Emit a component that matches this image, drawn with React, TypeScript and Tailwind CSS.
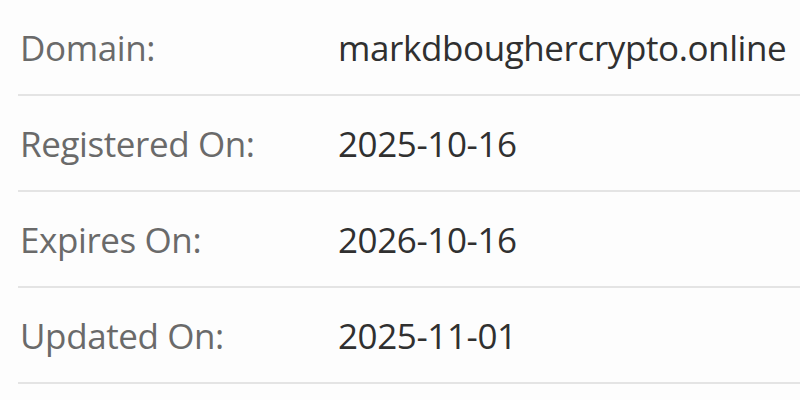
const rows = [
  { label: "Domain:", value: "markdboughercrypto.online" },
  { label: "Registered On:", value: "2025-10-16" },
  { label: "Expires On:", value: "2026-10-16" },
  { label: "Updated On:", value: "2025-11-01" },
]

export default function App() {
  return (
    <div className="w-[800px] h-[400px] overflow-hidden bg-[#fdfdfd] pl-[18px] font-['Open_Sans',sans-serif]">
      {rows.map((row) => (
        <div
          key={row.label}
          className="flex items-center h-[96px] border-b-2 border-[#e4e4e4] text-[35px] leading-none tracking-[-0.4px]"
        >
          <div className="w-[320px] pl-[2px] text-[#6a6a6a] whitespace-nowrap">{row.label}</div>
          <div className="text-[#303030] whitespace-nowrap">{row.value}</div>
        </div>
      ))}
    </div>
  )
}
